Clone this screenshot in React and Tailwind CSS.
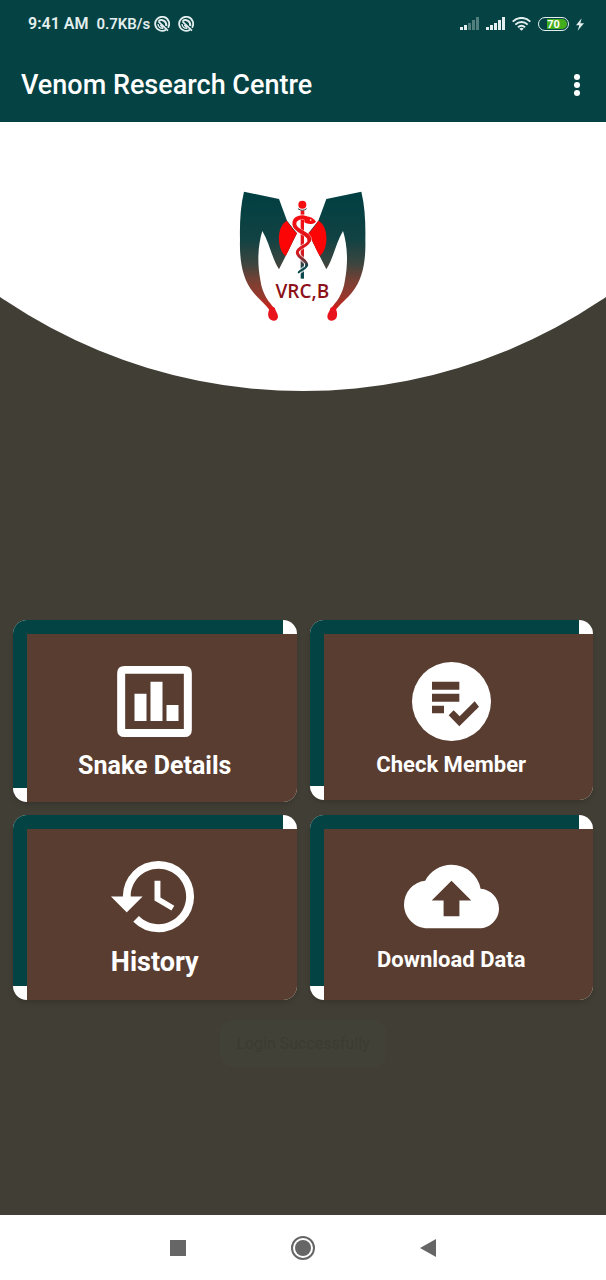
import React from "react";
import { MdHistory, MdBackup } from "react-icons/md";

function DoNotTrackIcon() {
  return (
    <svg viewBox="0 0 48 48" className="size-4" fill="none" stroke="#e3eeee" aria-hidden="true">
      <path d="M36 41A21 21 0 1 1 42 35" strokeWidth="5.5" />
      <path d="M14 15C22 8 38 14 37 30" strokeWidth="6" />
      <path d="M13 16L42 44" strokeWidth="5" />
      <path d="M12 24C12 34 20 38 28 37" strokeWidth="4" />
      <path d="M19 27l8 8" strokeWidth="5" />
    </svg>
  );
}

function SignalIcon({ active }) {
  const heights = [3, 5, 7, 10, 13];
  return (
    <svg viewBox="0 0 19 14" className="h-3.5 w-[19px]" fill="#e3eeee" aria-hidden="true">
      {heights.map((h, i) => (
        <rect key={h} x={i * 4} y={13 - h} width="3" height={h} opacity={i < active ? 1 : 0.35} />
      ))}
    </svg>
  );
}

function WifiIcon() {
  return (
    <svg viewBox="0 0 57 42" className="h-3.5 w-[19px]" fill="none" stroke="#e3eeee" strokeWidth="6" aria-hidden="true">
      <path d="M2 14C17 -1 40 -1 55 14" />
      <path d="M10 23C21 12 36 12 47 23" />
      <path d="M18 31C24 25 33 25 39 31" />
      <path d="M28.500 41L22 35C26 31 31 31 35 35Z" fill="#e3eeee" stroke="none" />
    </svg>
  );
}

function BatteryIcon() {
  return (
    <span className="relative flex h-3.5 w-[31px] items-center justify-center rounded-full border border-[#e3eeee] text-[11px] leading-none font-bold text-white">
      <span className="absolute inset-y-px right-px left-2 rounded-r-full bg-[#43ad1c]" />
      <span className="relative">70</span>
    </span>
  );
}

function BoltIcon() {
  return (
    <svg viewBox="0 0 24 38" className="h-[13px] w-2" fill="#e3eeee" aria-hidden="true">
      <path d="M17 0L0 21H10L5 38L24 15H13Z" />
    </svg>
  );
}

function ChartIcon() {
  return (
    <svg viewBox="0 0 224 213" className="h-[71px] w-[75px]" fill="currentColor" aria-hidden="true">
      <path
        fillRule="evenodd"
        d="M22 0H202Q224 0 224 22V191Q224 213 202 213H22Q0 213 0 191V22Q0 0 22 0ZM24 23V189H200V23Z"
      />
      <path d="M52 83h36v82H52zM100 47h36v118h-36zM148 117h36v48h-36z" />
    </svg>
  );
}

function ListCheckIcon() {
  return (
    <svg viewBox="0 0 237 237" className="size-[79px]" aria-hidden="true">
      <circle cx="118.500" cy="118.500" r="118.500" fill="currentColor" />
      <path
        fill="#593d30"
        d="M60 59h82v24H60zM60 95h82v24H60zM60 131h36v23H60zM110 160l15-15 18 18 45-45 13 16-59 59z"
      />
    </svg>
  );
}

const WING =
  "M57 35L162 57L186 122L216 160L162 268C141 236 134 190 112 153C99 195 96 245 106 300C112 345 132 365 150 388L136 394C124 374 99 356 84 336C54 300 43 245 45 180C44 130 46 80 57 35Z";
const WING_RED = "M186 122C166 132 160 160 162 184C164 206 172 222 182 228C196 204 204 180 216 160C204 150 194 134 186 122Z";
const DROP = "M137 378C132 390 126 402 132 414C140 426 158 425 159 410C159 400 151 392 149 383Z";

function Logo() {
  return (
    <svg viewBox="0 0 468 450" className="h-[150px] w-[156px]" role="img" aria-label="VRC,B">
      <defs>
        <linearGradient id="wing" gradientUnits="userSpaceOnUse" x1="0" y1="35" x2="0" y2="395">
          <stop offset="0" stopColor="#003f42" />
          <stop offset="0.4" stopColor="#124243" />
          <stop offset="0.6" stopColor="#3c453f" />
          <stop offset="0.75" stopColor="#7a4033" />
          <stop offset="0.88" stopColor="#98382c" />
          <stop offset="1" stopColor="#dd1a14" />
        </linearGradient>
        <linearGradient id="snake" gradientUnits="userSpaceOnUse" x1="0" y1="105" x2="0" y2="298">
          <stop offset="0" stopColor="#f50d10" />
          <stop offset="0.6" stopColor="#d51a20" />
          <stop offset="0.74" stopColor="#4b3b40" />
          <stop offset="0.82" stopColor="#0c474b" />
        </linearGradient>
      </defs>
      {["", "translate(466 0) scale(-1 1)"].map((t) => (
        <g key={t} transform={t || undefined}>
          <path d={WING} fill="url(#wing)" />
          <path d={WING_RED} fill="#fb0507" />
          <path d={DROP} fill="#e9131b" />
        </g>
      ))}
      <path d="M227 106h10V296h-10z" fill="url(#snake)" />
      <path d="M227 92h11v12h-11z" fill="#e9131b" />
      <path d="M219 86Q232 96 245 86" fill="none" stroke="#333" strokeWidth="3" />
      <circle cx="232" cy="74" r="12" fill="#f50d10" />
      <g fill="none" strokeLinecap="round">
        <path
          d="M250 119C236 106 206 112 208 133C210 156 254 158 253 180C252 200 216 200 217 218C218 236 247 238 245 256C243 268 228 268 221 277"
          stroke="#fff"
          strokeWidth="15"
          strokeOpacity="0.65"
        />
        <path d="M250 119C236 106 206 112 208 133C210 156 254 158 253 180" stroke="url(#snake)" strokeWidth="12" />
        <path d="M253 180C252 200 216 200 217 218C218 236 247 238 245 256" stroke="url(#snake)" strokeWidth="9" />
        <path d="M245 256C243 268 228 268 221 277" stroke="#0c474b" strokeWidth="6" />
      </g>
      <path d="M238 110C252 108 266 114 273 125C266 134 248 134 238 127Z" fill="#f50d10" />
      <circle cx="257" cy="120" r="2.500" fill="#fff" />
      <text
        x="232"
        y="353"
        textAnchor="middle"
        fill="#8d1119"
        className="font-['Open_Sans',sans-serif] text-[57px] font-semibold"
      >
        VRC,B
      </text>
    </svg>
  );
}

function MenuCard({ icon, label, className, labelClassName }) {
  return (
    <button
      type="button"
      className={`relative overflow-hidden rounded-[14px] bg-white text-white shadow-md ${className}`}
    >
      <span className="absolute top-0 right-3.5 bottom-3.5 left-0 bg-[#034343]" />
      <span className="absolute top-3.5 right-0 bottom-0 left-3.5 bg-[#593d30]" />
      <span className="relative flex flex-col items-center pt-[34px]">
        <span className="flex size-[95px] items-center justify-center">{icon}</span>
        <span className={`font-bold ${labelClassName}`}>{label}</span>
      </span>
    </button>
  );
}

export default function App() {
  return (
    <div className="flex min-h-screen flex-col bg-[#403e35] font-[Roboto,sans-serif]">
      <header className="bg-[#054243] text-white">
        <div className="flex h-12 items-center justify-between pr-[22px] pl-7 font-semibold text-[#e3eeee]">
          <div className="flex items-center gap-2">
            <span className="text-base">9:41 AM</span>
            <span className="flex items-center gap-1 text-[15px]">
              0.7KB/s
              <DoNotTrackIcon />
            </span>
            <DoNotTrackIcon />
          </div>
          <div className="flex items-center gap-[7px]">
            <SignalIcon active={2} />
            <SignalIcon active={5} />
            <WifiIcon />
            <BatteryIcon />
            <BoltIcon />
          </div>
        </div>
        <div className="flex h-[74px] items-center justify-between pr-[17px] pl-[21px]">
          <h1 className="text-[27px] font-medium">Venom Research Centre</h1>
          <button type="button" aria-label="More options" className="flex h-10 w-6 items-center justify-center">
            <svg viewBox="0 0 6 22" className="h-[22px] w-1.5" fill="currentColor" aria-hidden="true">
              <circle cx="3" cy="3" r="3" />
              <circle cx="3" cy="11" r="3" />
              <circle cx="3" cy="19" r="3" />
            </svg>
          </button>
        </div>
      </header>

      <main className="flex flex-1 flex-col">
        <div className="flex h-[269px] justify-center bg-white pt-[58px] [clip-path:circle(535px_at_50%_-266px)]">
          <Logo />
        </div>

        <div className="mt-[229px] grid grid-cols-2 items-start gap-[13px] px-[13px]">
          <MenuCard
            icon={<ChartIcon />}
            label="Snake Details"
            className="pb-[19px]"
            labelClassName="text-[25px] leading-[34px]"
          />
          <MenuCard
            icon={<ListCheckIcon />}
            label="Check Member"
            className="pb-[19px]"
            labelClassName="text-[22px] leading-8"
          />
          <MenuCard
            icon={<MdHistory className="size-[95px]" />}
            label="History"
            className="pb-[19px]"
            labelClassName="text-[27px] leading-[37px]"
          />
          <MenuCard
            icon={<MdBackup className="size-[95px]" />}
            label="Download Data"
            className="pb-6"
            labelClassName="text-[22px] leading-8"
          />
        </div>

        <div
          role="status"
          className="mx-auto mt-5 rounded-xl bg-[#424138] px-4 py-3 text-base leading-[23px] text-[#3c3b32]"
        >
          Login Successfully
        </div>
      </main>

      <nav className="flex h-[65px] items-center justify-center gap-[101px] bg-white text-[#666]">
        <button type="button" aria-label="Recent apps" className="flex size-6 items-center justify-center">
          <span className="size-4 bg-[#666]" />
        </button>
        <button
          type="button"
          aria-label="Home"
          className="flex size-6 items-center justify-center rounded-full border-2 border-[#666]"
        >
          <span className="size-4 rounded-full bg-[#666]" />
        </button>
        <button type="button" aria-label="Back" className="flex size-6 items-center justify-center">
          <svg viewBox="0 0 16 18" className="h-[18px] w-4" fill="currentColor" aria-hidden="true">
            <path d="M0 9L16 0V18Z" />
          </svg>
        </button>
      </nav>
    </div>
  );
}
